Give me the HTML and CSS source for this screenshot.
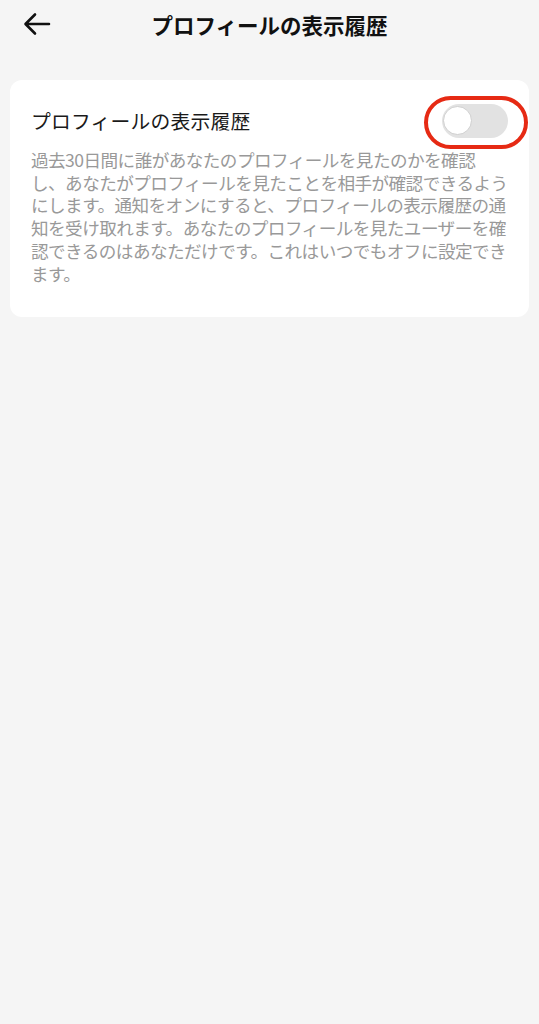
FILE: index.html
```html
<!DOCTYPE html>
<html lang="ja">
<head>
<meta charset="utf-8">
<link rel="stylesheet" href="styles.css">
</head>
<body>
<div class="page">
  <header class="topbar">
    <span class="back">
      <svg width="28" height="24" viewBox="0 0 28 24"><path d="M26 12H3M12 2.5L2.5 12L12 21.5" fill="none" stroke="#111" stroke-width="2.6" stroke-linecap="round" stroke-linejoin="round"/></svg>
    </span>
    <h1 class="title">プロフィールの表示履歴</h1>
  </header>
  <section class="card">
    <div class="row">
      <span class="label">プロフィールの表示履歴</span>
      <span class="toggle-wrap">
        <span class="toggle"><span class="knob"></span></span>
        <span class="ring"></span>
      </span>
    </div>
    <p class="desc">過去30日間に誰があなたのプロフィールを見たのかを確認<br>し、あなたがプロフィールを見たことを相手が確認できるよう<br>にします。通知をオンにすると、プロフィールの表示履歴の通<br>知を受け取れます。あなたのプロフィールを見たユーザーを確<br>認できるのはあなただけです。これはいつでもオフに設定でき<br>ます。</p>
  </section>
</div>
</body>
</html>
```

FILE: styles.css
```css
html, body {
  margin: 0;
  padding: 0;
  background: #f5f5f5;
}
body {
  font-family: "Noto Sans CJK JP", "Noto Sans", sans-serif;
  color: #1a1a1a;
}
.page {
  width: 539px;
  height: 1024px;
  background: #f5f5f5;
}
.topbar {
  position: relative;
  height: 50px;
  display: flex;
  align-items: center;
  justify-content: center;
}
.back {
  position: absolute;
  left: 23px;
  top: 12px;
  width: 28px;
  height: 24px;
}
.back svg { display: block; }
.title {
  margin: 0;
  font-size: 21.5px;
  font-weight: 700;
  line-height: 1;
  color: #111;
}
.card {
  margin: 30px 10px 0 10px;
  background: #fff;
  border-radius: 12px;
  padding: 23px 20px 0 21px;
  height: 214px;
}
.row {
  display: flex;
  align-items: center;
  justify-content: space-between;
  height: 36px;
}
.label {
  font-size: 19.8px;
  line-height: 1;
  color: #1a1a1a;
  letter-spacing: 0.2px;
}
.toggle-wrap {
  position: relative;
  width: 68px;
  height: 34px;
  margin-right: -1px;
}
.toggle {
  display: block;
  width: 66px;
  height: 34px;
  border-radius: 17px;
  background: #e2e2e2;
  position: relative;
}
.knob {
  position: absolute;
  left: 1px;
  top: 2px;
  width: 29px;
  height: 29px;
  border-radius: 50%;
  background: #fff;
  border: 1px solid #cfcfcf;
  box-sizing: border-box;
}
.ring {
  position: absolute;
  left: -18px;
  top: -8px;
  width: 104px;
  height: 53px;
  border: 4.5px solid #e62a14;
  border-radius: 27px;
  box-sizing: border-box;
}
.desc {
  margin: 10px 0 0 0;
  font-size: 17.6px;
  line-height: 22.7px;
  letter-spacing: -0.55px;
  color: #999999;
  white-space: nowrap;
}
```
